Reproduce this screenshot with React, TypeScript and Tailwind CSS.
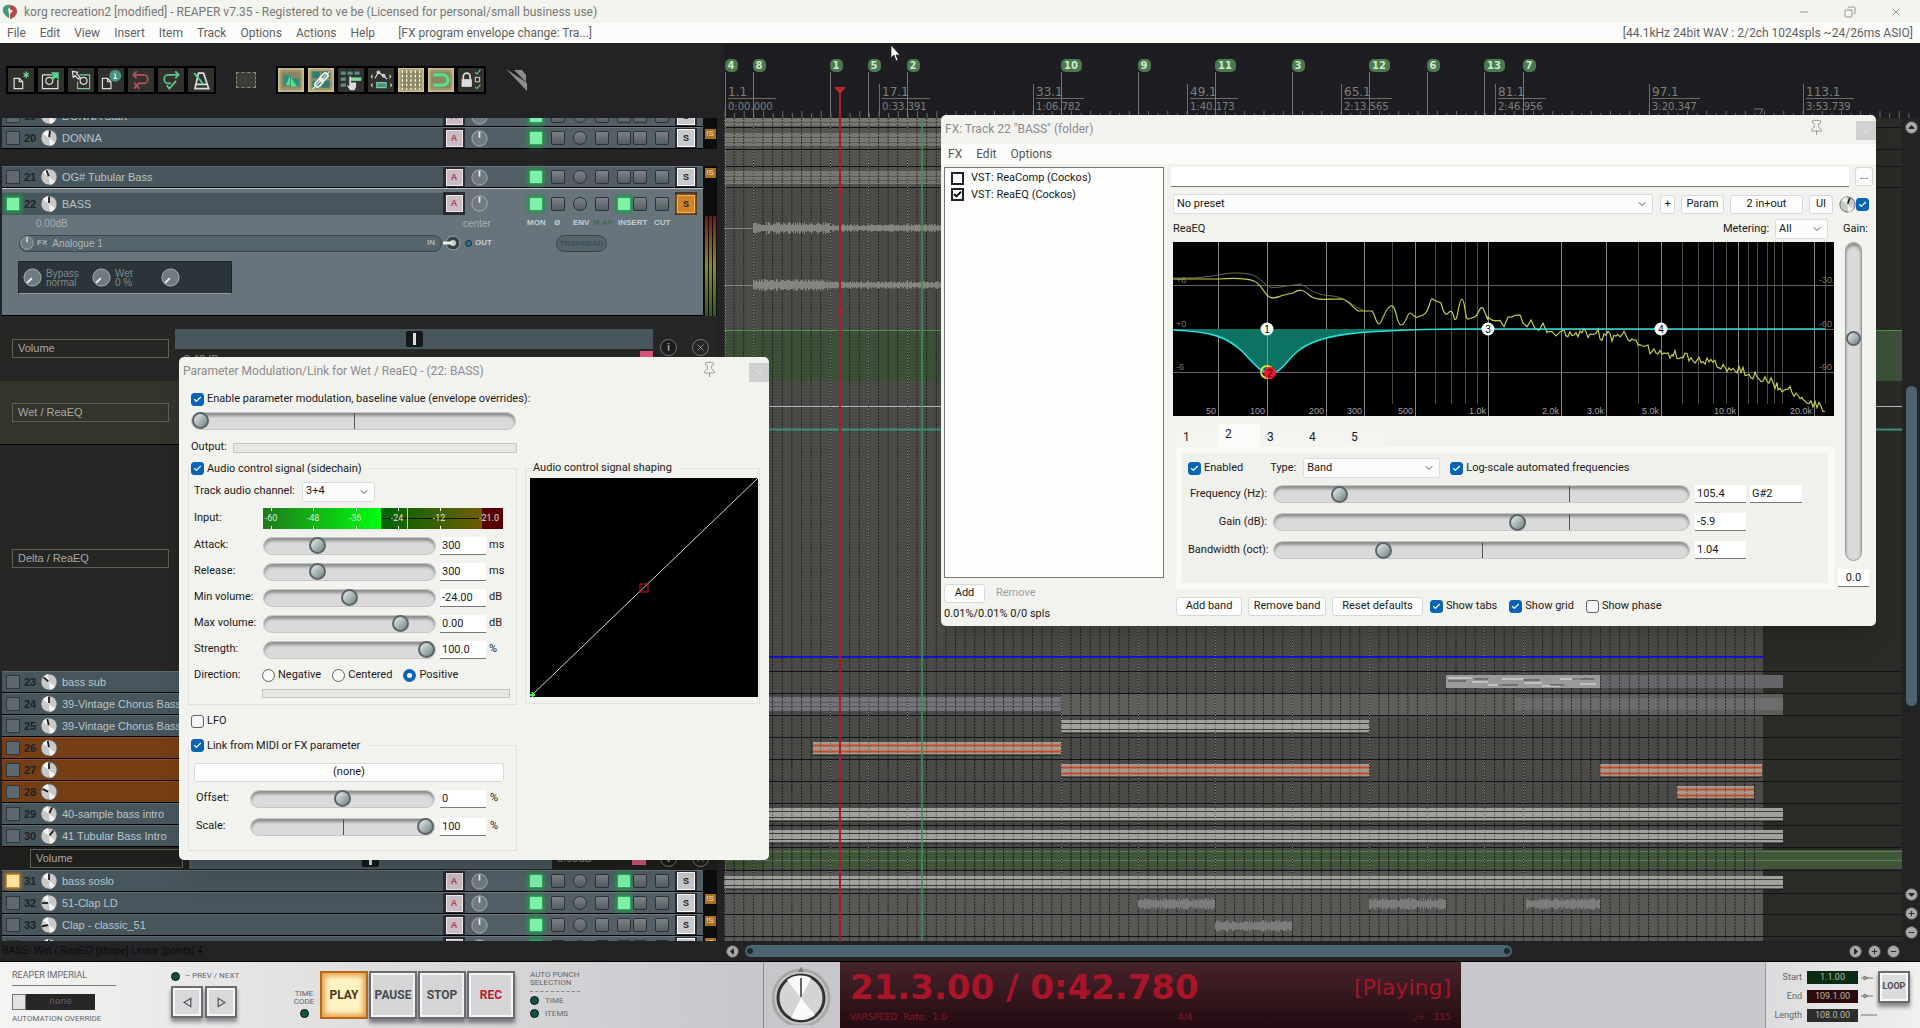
import type { ReactNode } from 'react';
import { Check, ChevronDown, Copy, Minus, Pin, X } from 'lucide-react';
import clsx from 'clsx';

// ---------------------------------------------------------------------------
// Data
// ---------------------------------------------------------------------------

interface Track {
  num: number;
  name: string;
  tint?: 'orange';
  angle?: number;
  insert?: boolean;
  solo?: boolean;
  badge?: boolean;
  arm?: 'green' | 'amber';
}

const MENU = ['File', 'Edit', 'View', 'Insert', 'Item', 'Track', 'Options', 'Actions', 'Help'];

const LOWER_TRACKS: Track[] = [
  { num: 23, name: 'bass sub', angle: -50 },
  { num: 24, name: '39-Vintage Chorus Bass', angle: 0 },
  { num: 25, name: '39-Vintage Chorus Bass', angle: -14 },
  { num: 26, name: '', tint: 'orange', angle: -10 },
  { num: 27, name: '', tint: 'orange', angle: 0 },
  { num: 28, name: '', tint: 'orange', angle: -65 },
  { num: 29, name: '40-sample bass intro', angle: 25 },
  { num: 30, name: '41 Tubular Bass Intro', angle: 40 },
];

const BOTTOM_TRACKS: Track[] = [
  { num: 31, name: 'bass soslo', angle: 0, insert: true, arm: 'amber' },
  { num: 32, name: '51-Clap LD', angle: -90, insert: true, badge: true },
  { num: 33, name: 'Clap - classic_51', angle: -100, badge: true },
];

const MARKERS = [
  { id: 4, x: 1 },
  { id: 8, x: 29 },
  { id: 1, x: 106 },
  { id: 5, x: 144 },
  { id: 2, x: 183 },
  { id: 10, x: 337 },
  { id: 9, x: 414 },
  { id: 11, x: 491 },
  { id: 3, x: 568 },
  { id: 12, x: 645 },
  { id: 6, x: 703 },
  { id: 13, x: 760 },
  { id: 7, x: 799 },
];

const RULER = [
  { bar: '1.1', time: '0:00.000' },
  { bar: '17.1', time: '0:33.391' },
  { bar: '33.1', time: '1:06.782' },
  { bar: '49.1', time: '1:40.173' },
  { bar: '65.1', time: '2:13.565' },
  { bar: '81.1', time: '2:46.956' },
  { bar: '97.1', time: '3:20.347' },
  { bar: '113.1', time: '3:53.739' },
];

const BARS_PX = 154;
const TICK_PX = BARS_PX / 16;
const PROJECT_END = 1039;
const ARRANGE_W = 1178;

// deterministic noise for the wave forms and the spectrum
const noise = (n: number) => {
  const s = Math.sin(n * 127.1 + 11.7) * 43758.5453;
  return s - Math.floor(s);
};

// ---------------------------------------------------------------------------
// Small controls
// ---------------------------------------------------------------------------

function CheckBox({ label, checked, square }: { label: string; checked?: boolean; square?: boolean }) {
  return (
    <label className="flex items-center gap-[3px] whitespace-nowrap">
      <span className="relative flex size-[13px]">
        <input
          type="checkbox"
          defaultChecked={checked}
          className={clsx(
            'size-[13px] appearance-none',
            square
              ? 'border-2 border-[#222] bg-white'
              : 'rounded-[3px] border border-[#606060] bg-[#f6f6f6] checked:border-[#0a64b4] checked:bg-[#0a64b4]',
          )}
        />
        {checked && (
          <Check
            className={clsx('pointer-events-none absolute inset-[2px] size-[9px]', square ? 'text-black' : 'text-white')}
            strokeWidth={square ? 5 : 3}
          />
        )}
      </span>
      {label}
    </label>
  );
}

function Radio({ label, checked }: { label: string; checked?: boolean }) {
  return (
    <label className="flex items-center gap-[3px]">
      <input
        type="radio"
        name="direction"
        defaultChecked={checked}
        className="size-[13px] appearance-none rounded-full border border-[#606060] bg-[#f8f8f8] checked:border-4 checked:border-[#0a64b4] checked:bg-white"
      />
      {label}
    </label>
  );
}

function Slider({ label, value, tick, className }: { label: string; value: number; tick?: number; className: string }) {
  return (
    <span className={clsx('relative flex h-[18px]', className)}>
      {tick !== undefined && (
        <span className="absolute inset-y-[1px] z-10 w-px bg-[#555]" style={{ left: `${tick}%` }} />
      )}
      <input
        type="range"
        aria-label={label}
        min={0}
        max={1000}
        defaultValue={value}
        className="h-[18px] w-full appearance-none rounded-full border border-[#c6c6c6] bg-[#dadada] shadow-[inset_0_3px_3px_#8f8f8f] [&::-webkit-slider-thumb]:relative [&::-webkit-slider-thumb]:z-20 [&::-webkit-slider-thumb]:size-[17px] [&::-webkit-slider-thumb]:appearance-none [&::-webkit-slider-thumb]:rounded-full [&::-webkit-slider-thumb]:border-2 [&::-webkit-slider-thumb]:border-[#5d6468] [&::-webkit-slider-thumb]:bg-linear-to-br [&::-webkit-slider-thumb]:from-[#e8eeee] [&::-webkit-slider-thumb]:to-[#6f8482]"
      />
    </span>
  );
}

function Field({ label, value, className }: { label: string; value: string; className: string }) {
  return (
    <input
      type="text"
      aria-label={label}
      defaultValue={value}
      className={clsx('h-[18px] border-b border-[#777] bg-white px-[2px] text-[11px]', className)}
    />
  );
}

function Dropdown({ label, value, className }: { label: string; value: string; className: string }) {
  return (
    <span className={clsx('relative flex h-5', className)}>
      <select
        aria-label={label}
        className="h-full w-full appearance-none rounded-[2px] border border-[#dcdcdc] bg-[#fcfcfc] pl-[3px] text-[11px]"
      >
        <option>{value}</option>
      </select>
      <ChevronDown className="pointer-events-none absolute top-[4px] right-[5px] size-3 text-[#555]" strokeWidth={2} />
    </span>
  );
}

function DialogButton({ children, className }: { children: ReactNode; className: string }) {
  return (
    <button
      type="button"
      className={clsx('h-[19px] rounded-[3px] border border-[#d8d8d8] bg-[#fdfdfd] text-center whitespace-nowrap', className)}
    >
      {children}
    </button>
  );
}

function DialogTitle({ children }: { children: ReactNode }) {
  return (
    <div className="flex h-[29px] items-start pl-1 text-[#8c8c8c]">
      <h2 className="flex-1 pt-[6px] text-[12px] leading-4 font-normal">{children}</h2>
      <Pin className="mt-[4px] mr-[31px] size-[17px] text-[#777]" strokeWidth={1} />
      <button type="button" aria-label="Close" className="mt-[6px] flex h-[19px] w-5 items-center justify-center bg-[#d0d0d0]">
        <X className="size-[10px] text-[#e2e2e2]" />
      </button>
    </div>
  );
}

// ---------------------------------------------------------------------------
// Toolbar
// ---------------------------------------------------------------------------

const PAGE = 'M6 12h6l4 4v8H6zM12 12v4h4';

const TOOLS: { name: string; on?: boolean; icon: ReactNode }[] = [
  {
    name: 'New project',
    icon: (
      <>
        <path d={PAGE} stroke="#ddd" />
        <path d="M20 4v8M17 6l6 4M23 6l-6 4" stroke="#6fe09a" />
      </>
    ),
  },
  {
    name: 'Open project',
    icon: (
      <>
        <path d="M4 8h12M4 8v16h18V14" stroke="#ddd" />
        <circle cx="12" cy="15" r="4" stroke="#ddd" />
        <path d="M14 5h9v9l-3-3-4 3-2-2 3-4z" fill="#55d68a" />
      </>
    ),
  },
  {
    name: 'Save project',
    icon: (
      <>
        <path d="M12 8h12v16H10V16" stroke="#6fcf97" />
        <circle cx="17" cy="15" r="4" stroke="#ddd" />
        <path d="M4 4l6 1-1 2 4 4-2 2-4-4-2 2z" stroke="#ddd" />
      </>
    ),
  },
  {
    name: 'Project settings',
    icon: (
      <>
        <path d={PAGE} transform="translate(-2 0)" stroke="#ddd" />
        <circle cx="19" cy="9" r="7" fill="#4d8f86" />
        <path d="M18 7h1v5h2m-4 0h2" stroke="#cfe" />
      </>
    ),
  },
  {
    name: 'Undo',
    icon: <path d="M5 8h12a5 5 0 0 1 0 10h-5M9 4L5 8l4 4M6 17l6 7M12 17l-6 7" stroke="#b8525c" strokeWidth="2" />,
  },
  {
    name: 'Redo',
    icon: <path d="M23 8H11a5 5 0 0 0 0 10h3M19 4l4 4-4 4M9 20l3 4 8-9" stroke="#5fc78a" strokeWidth="2" />,
  },
  {
    name: 'Metronome',
    icon: (
      <>
        <path d="M11 6h6l6 18H7zM9 19h12" stroke="#ddd" strokeWidth="2" />
        <path d="M6 6l11 13" stroke="#4fd787" strokeWidth="2" />
      </>
    ),
  },
];

const TOGGLES: typeof TOOLS = [
  {
    name: 'Auto crossfade',
    on: true,
    icon: (
      <>
        <path d="M5 8h9v13H5zM15 12h9v10h-9z" fill="#2f8f78" stroke="none" />
        <path d="M8 20L13 8v12zM14 22V11l7 11z" fill="#58e08c" stroke="none" />
      </>
    ),
  },
  {
    name: 'Item grouping',
    on: true,
    icon: (
      <>
        <path d="M4 4h9v8H4zM15 4h9v8h-9zM4 15h9v8H4zM15 15h9v8h-9z" fill="#2f7d74" stroke="none" />
        <path d="M4 25L24 4" stroke="#eee" />
        <rect x="6" y="14" width="11" height="6" rx="3" transform="rotate(-45 12 17)" stroke="#eee" strokeWidth="2" />
        <rect x="12" y="8" width="11" height="6" rx="3" transform="rotate(-45 17 11)" stroke="#eee" strokeWidth="2" />
      </>
    ),
  },
  {
    name: 'Ripple editing',
    icon: (
      <>
        <path d="M2 4h6v4H2zM10 4h6v4h-6zM18 4h6v4h-6zM2 11h6v4H2zM2 18h6v4H2z" fill="#568f86" stroke="none" />
        <path d="M14 11h12v4H14z" fill="#7be0a0" stroke="none" />
        <path d="M12 10h2v7h6v5l-2 4h-5l-4-6 3 1z" fill="#ddd" stroke="none" />
      </>
    ),
  },
  {
    name: 'Move envelopes',
    icon: (
      <>
        <path d="M7 12l4-7 7 5 3 3" stroke="#ddd" />
        <circle cx="11" cy="5" r="1.5" stroke="#ddd" />
        <circle cx="17" cy="9" r="1.5" stroke="#ddd" />
        <path d="M9 17h11v6H9z" fill="#4a8f80" stroke="#7ac9a0" />
        <path d="M4 7l-2 3 2 3zM24 7l2 3-2 3zM4 17l-2 3 2 3zM25 17l2 3-2 3z" fill="#ddd" stroke="none" />
      </>
    ),
  },
  {
    name: 'Grid lines',
    on: true,
    icon: <path d="M4 3v22M9 3v22M14 3v22M19 3v22M24 3v22" stroke="#fff" strokeDasharray="3 2" />,
  },
  {
    name: 'Snap',
    on: true,
    icon: <path d="M5 8h11a6 6 0 0 1 0 12H5" stroke="#55e08c" strokeWidth="4" />,
  },
  {
    name: 'Lock',
    icon: (
      <>
        <path d="M3 13h12v9H3z" fill="#ddd" stroke="none" />
        <path d="M5 13v-3a4 4 0 0 1 8 0v3" stroke="#ddd" strokeWidth="2" />
        <path d="M19 5l2 2 4-5M19 22l2 2 4-5" stroke="#55c987" />
        <rect x="19" y="11" width="5" height="5" stroke="#bbb" />
      </>
    ),
  },
];

function ToolGroup({ items }: { items: typeof TOOLS }) {
  return (
    <div className="flex">
      {items.map((t) => (
        <button
          key={t.name}
          type="button"
          aria-label={t.name}
          className={clsx(
            'flex h-7 w-[30px] items-center justify-center border-2 border-black',
            t.on ? 'bg-[#8b8561] shadow-[inset_0_0_3px_2px_#d3c48d]' : 'bg-[#31312d]',
          )}
        >
          <svg viewBox="0 0 28 28" className="size-6" fill="none" strokeWidth="1.4">
            {t.icon}
          </svg>
        </button>
      ))}
    </div>
  );
}

function Toolbar() {
  return (
    <div className="flex h-[75px] shrink-0 items-start bg-[#232326] pt-[23px] pl-[6px]">
      <ToolGroup items={TOOLS} />
      <div className="mx-5 mt-[6px] h-4 w-5 border border-dashed border-[#8a8a80] bg-[#3d3d37]" />
      <ToolGroup items={TOGGLES} />
      <svg className="mt-[2px] ml-[19px] h-6 w-6" viewBox="0 0 24 24">
        <path d="M1 1L22 23V15zM9 2l12 12V7l-4-5z" fill="#8d8d8d" />
      </svg>
    </div>
  );
}

// ---------------------------------------------------------------------------
// Track panel
// ---------------------------------------------------------------------------

function Knob({ size, angle = 0, dark }: { size: number; angle?: number; dark?: boolean }) {
  return (
    <svg width={size} height={size} viewBox="0 0 20 20" className="shrink-0">
      <circle cx="10" cy="10" r="9" fill={dark ? '#6f7b7f' : '#c9c9c9'} stroke={dark ? '#aebabd' : '#5a5a5a'} />
      {!dark && <path d="M10 10L3 5A9 9 0 0 1 9 1zM10 10l7 5a9 9 0 0 1-6 4z" fill="#f4f4f4" />}
      <path d="M10 9V2" stroke={dark ? '#e8eeee' : '#1d1d1d'} strokeWidth="2" transform={`rotate(${angle} 10 10)`} />
    </svg>
  );
}

function Pad({ name, on, round, className }: { name: string; on?: boolean; round?: boolean; className?: string }) {
  return (
    <button
      type="button"
      aria-label={name}
      className={clsx(
        'shrink-0 border',
        on ? 'size-[14px] border-[#2aa85c] bg-[#7ef0a8] shadow-[0_0_4px_2px_#2c8f52]' : 'size-[14px] border-[#2c3236] bg-linear-to-b from-[#7d8386] to-[#565d62]',
        round ? 'rounded-full' : 'rounded-[2px]',
        className,
      )}
    />
  );
}

function TrackControls({ track }: { track: Track }) {
  return (
    <div className="flex shrink-0 items-center">
      <div className="flex h-full w-[22px] items-center justify-center bg-[#2a2a30]">
        <button
          type="button"
          className="size-[17px] border border-[#efe6ea] bg-[#c9bcc4] text-center text-[9px] leading-[15px] font-bold text-[#b04058]"
        >
          A
        </button>
      </div>
      <div className="ml-[6px] flex w-[58px]">
        <Knob size={17} dark />
      </div>
      <Pad name="Monitor" on />
      <Pad name="Phase" className="ml-2" />
      <Pad name="Envelope" round className="ml-2" />
      <Pad name="Master send" className="ml-2" />
      <Pad name="FX" on={track.insert} className="ml-2" />
      <Pad name="FX bypass" className="ml-[2px]" />
      <Pad name="Mute" className="ml-2" />
      <div className="ml-[6px] flex h-full w-[22px] items-center justify-center bg-[#2a2a30]">
        <button
          type="button"
          className={clsx(
            'size-[18px] border text-center text-[9px] leading-4 font-bold text-[#222]',
            track.solo ? 'border-[#f0b060] bg-[#d08428] shadow-[0_0_3px_1px_#b46a1c]' : 'border-white bg-[#c9c9c9]',
          )}
        >
          S
        </button>
      </div>
      <span className="w-[6px]" />
    </div>
  );
}

function TrackHead({ track }: { track: Track }) {
  return (
    <div
      className={clsx(
        'flex min-w-0 flex-1 items-center border-t pl-[4px]',
        track.tint === 'orange' ? 'border-[#8e4d1e] bg-[#763e15]' : 'border-[#5c6c72] bg-[#47565c]',
      )}
    >
      <span
        className={clsx(
          'size-[14px] shrink-0 border',
          track.arm === 'green' && 'border-[#2aa85c] bg-[#7ef0a8] shadow-[0_0_4px_2px_#2c8f52]',
          track.arm === 'amber' && 'border-[#c98a2b] bg-[#ffe2a0] shadow-[0_0_3px_1px_#c27d1f]',
          !track.arm && 'border-[#2f373b] bg-[#5d696e]',
        )}
      />
      <span className="w-[20px] text-center text-[11px] font-bold text-[#1c2326]">{track.num}</span>
      <Knob size={18} angle={track.angle} />
      <span className="ml-1 truncate text-[11px] text-[#b9c4c8]">{track.name}</span>
    </div>
  );
}

function Meter({ badge, hot }: { badge?: boolean; hot?: boolean }) {
  return (
    <div className="flex w-[14px] shrink-0 justify-center bg-[#0d0d0d]">
      {badge && <span className="mt-[2px] h-[10px] w-[11px] bg-[#a86f22] text-center text-[8px] leading-[10px] text-[#f5e6c0]">!S</span>}
      {hot && (
        <div className="flex h-full gap-px pt-[28px]">
          <div className="w-[3px] bg-linear-to-b from-[#6e1512] via-[#8a8a2a] to-[#2f5a1c]" />
          <div className="w-[3px] bg-linear-to-b from-[#6e1512] via-[#8a8a2a] to-[#2f5a1c]" />
          <div className="w-[3px] bg-linear-to-b from-[#6e1512] via-[#8a8a2a] to-[#2f5a1c]" />
        </div>
      )}
    </div>
  );
}

function TrackRow({ track }: { track: Track }) {
  return (
    <div className="flex h-[22px] shrink-0 pl-[2px]">
      <div className="flex min-w-0 flex-1 border-b border-black">
        <TrackHead track={track} />
        <div className="flex border-t border-[#6b787e] bg-[#525f67]">
          <TrackControls track={track} />
        </div>
      </div>
      <Meter badge={track.badge} />
    </div>
  );
}

const BASS: Track = { num: 22, name: 'BASS', angle: 0, insert: true, solo: true, arm: 'green' };

function BassPanel() {
  return (
    <div className="flex h-32 shrink-0 pl-[2px]">
      <div className="flex flex-1 flex-col border-t border-b border-t-[#b8c2c8] border-b-black bg-[#68747c]">
        <div className="mt-[3px] flex h-[23px]">
          <TrackHead track={BASS} />
          <div className="flex">
            <TrackControls track={BASS} />
          </div>
        </div>
        <div className="flex h-4 items-center text-[8px] font-bold text-[#c3ccd0]">
          <span className="w-[461px] pl-[34px] text-[10px] font-normal text-[#a5b0b4]">0.00dB</span>
          <span className="w-[64px] text-[10px] font-normal text-[#a5b0b4]">center</span>
          <span className="w-[27px]">MON</span>
          <span className="w-[19px]">Ø</span>
          <span className="w-[20px]">ENV</span>
          <span className="w-[25px] text-[#3f6d52]">M.AF</span>
          <span className="w-[36px]">INSERT</span>
          <span>CUT</span>
        </div>
        <div className="mt-[3px] flex h-[18px] items-center text-[8px] font-bold text-[#aab5b9]">
          <div className="ml-[17px] flex h-[17px] w-[423px] items-center rounded-full border border-[#39484f] bg-[#55656c]">
            <Knob size={14} dark />
            <span className="ml-[3px]">FX</span>
            <span className="ml-[5px] flex-1 text-[10px] font-normal">Analogue 1</span>
            <span className="mr-[6px]">IN</span>
          </div>
          <svg width="20" height="16" viewBox="0 0 20 16" className="shrink-0">
            <circle cx="11" cy="8" r="7" fill="#3a4246" stroke="#9aa4a8" />
            <circle cx="11" cy="8" r="3" fill="#c8d0d2" />
            <path d="M1 8h9" stroke="#e8eeee" strokeWidth="3" />
          </svg>
          <span className="ml-[3px] size-[7px] rounded-full border border-[#0e2d3a] bg-[#2b6b86]" />
          <span className="ml-[3px] text-[#c3ccd0]">OUT</span>
          <span className="ml-[64px] h-[17px] w-[51px] rounded-full border border-[#38464c] bg-[#55656c] text-center leading-[15px] font-normal text-[#38464c]">
            TRIM/READ
          </span>
        </div>
        <div className="mt-[9px] ml-4 flex h-[33px] w-[214px] items-center border border-b-[#8e9aa0] border-[#1e262a] bg-[#2b3438] text-[10px] leading-[9px] text-[#7e8b8f]">
          <span className="ml-1">
            <Knob size={19} dark angle={-135} />
          </span>
          <span className="ml-1 w-[46px]">
            Bypass
            <br />
            normal
          </span>
          <Knob size={19} dark angle={-135} />
          <span className="ml-1 w-[46px]">
            Wet
            <br />0 %
          </span>
          <Knob size={19} dark angle={-135} />
        </div>
      </div>
      <Meter hot />
    </div>
  );
}

function EnvName({ children, className }: { children: ReactNode; className: string }) {
  return (
    <div className={clsx('h-[19px] border border-[#5e5e58] pl-[5px] text-[11px] leading-[17px] text-[#a8a8a4]', className)}>{children}</div>
  );
}

function EnvFader({ className }: { className: string }) {
  return (
    <div className={clsx('flex h-5 items-center justify-center bg-[#47565c]', className)}>
      <span className="flex h-4 w-[17px] justify-center rounded-[2px] bg-[#15191b] py-[2px]">
        <span className="w-[3px] bg-[#ddd]" />
      </span>
    </div>
  );
}

function EnvButtons() {
  return (
    <>
      <span className="ml-[14px] flex size-[17px] items-center justify-center rounded-full border border-[#777] bg-[#1c1c1c] text-[11px] font-bold text-[#999]">
        i
      </span>
      <span className="ml-[15px] flex size-[17px] items-center justify-center rounded-full border border-[#777] text-[#999]">
        <X className="size-[11px]" />
      </span>
    </>
  );
}

function TrackPanel() {
  return (
    <div className="flex min-h-0 flex-1 flex-col overflow-hidden bg-[#232326] pr-[7px] font-['Liberation_Sans',Arial,sans-serif]">
      <div className="flex h-[9px] shrink-0 flex-col justify-end overflow-hidden">
        <TrackRow track={{ num: 19, name: 'DONNA Start', angle: 0 }} />
      </div>
      <TrackRow track={{ num: 20, name: 'DONNA', angle: 8, badge: true }} />
      <div className="h-[17px] shrink-0" />
      <TrackRow track={{ num: 21, name: 'OG# Tubular Bass', angle: -20, badge: true }} />
      <BassPanel />
      <div className="flex h-[65px] shrink-0 items-start bg-[#262624] pt-[13px] pl-3">
        <EnvName className="mt-[10px] w-[157px]">Volume</EnvName>
        <div className="ml-[6px] w-[478px]">
          <EnvFader className="w-full" />
          <div className="flex justify-between pt-[2px] pl-[5px] text-[11px] leading-4 text-[#8a8a8a]">
            -2.42dB
            <span className="h-[9px] w-[13px] bg-[#d2567a]" />
          </div>
        </div>
        <div className="mt-[10px] -ml-[7px] flex">
          <EnvButtons />
        </div>
      </div>
      <div className="flex h-[63px] shrink-0 items-center bg-[#34342b] pl-3">
        <EnvName className="w-[157px]">Wet / ReaEQ</EnvName>
      </div>
      <div className="flex h-[227px] shrink-0 items-center border-t border-black bg-[#262624] pl-3">
        <EnvName className="w-[157px]">Delta / ReaEQ</EnvName>
      </div>
      {LOWER_TRACKS.map((t) => (
        <TrackRow key={t.num} track={t} />
      ))}
      <div className="flex h-[23px] shrink-0 items-center bg-[#1f1f1e] pl-[30px]">
        <EnvName className="w-[153px]">Volume</EnvName>
        <EnvFader className="ml-[6px] w-[363px]" />
        <span className="flex-1 pl-[5px] text-[11px] text-[#8a8a8a]">0.00dB</span>
        <span className="h-[13px] w-[14px] bg-[#d2567a]" />
        <EnvButtons />
        <span className="w-[8px]" />
      </div>
      {BOTTOM_TRACKS.map((t) => (
        <TrackRow key={t.num} track={t} />
      ))}
      <TrackRow track={{ num: 34, name: '', badge: true }} />
    </div>
  );
}

// ---------------------------------------------------------------------------
// Ruler + arrange view
// ---------------------------------------------------------------------------

function Ruler() {
  return (
    <svg className="block h-[75px] w-full shrink-0 bg-[#1e1e22]">
      {Array.from({ length: 124 }, (_, i) => (
        <path key={i} d={`M${i * TICK_PX + 1} 75v${i % 2 ? -5 : -7}`} stroke="#666" />
      ))}
      {RULER.map((r, i) => (
        <g key={r.bar} className="font-['DejaVu_Sans',sans-serif]" fill="#7f7f79">
          <path d={`M${i * BARS_PX + 1}.5 41v32M${i * BARS_PX + 4} 55.500h48`} stroke="#6c6c68" />
          <text x={i * BARS_PX + 4} y="53" className="text-[12px]">
            {r.bar}
          </text>
          <text x={i * BARS_PX + 4} y="67" className="text-[10px]">
            {r.time}
          </text>
        </g>
      ))}
      {MARKERS.map((m) => (
        <g key={m.id}>
          <path d={`M${m.x}.5 29v45`} stroke="#77776f" />
          <rect x={m.x} y="16" width={m.id > 9 ? 21 : 13} height="13" rx="5" fill="#4b7a52" />
          <text x={m.x + (m.id > 9 ? 10 : 6)} y="26" textAnchor="middle" fill="#cfe8c8" className="font-['DejaVu_Sans',sans-serif] text-[10px] font-bold">
            {m.id}
          </text>
        </g>
      ))}
      <path d="M110 44h12l-6 7z" fill="#b3262e" />
      <path d="M116 50v25" stroke="#a02430" strokeWidth="2" />
      <path d="M1030 66h9l-3 5" fill="none" stroke="#777" />
    </svg>
  );
}

function MidiItem({ x, y, w, hot }: { x: number; y: number; w: number; hot?: boolean }) {
  return (
    <g>
      <rect x={x} y={y} width={w} height="13" fill={hot ? '#a39a90' : '#a0a09d'} />
      <path d={`M${x} ${y + 3.5}h${w}M${x} ${y + 9.5}h${w}`} stroke={hot ? '#cc4a2a' : '#3b3b3b'} strokeWidth={hot ? 2 : 1} />
      <path d={`M${x} ${y + 13}h${w}`} stroke="#111" />
    </g>
  );
}

function wave(x0: number, x1: number, mid: number, amp: number) {
  let d = '';
  for (let x = x0; x < x1; x++) {
    const a = amp * (0.45 + noise(x * x + mid) * 0.55);
    d += `M${x + 0.5} ${mid - a}v${a * 2}`;
  }
  return d;
}

const LANE_LINES = [9, 31, 48, 69, 553, 575, 597, 619, 641, 663, 685, 707, 729, 752, 775, 796, 818];

function Arrange() {
  return (
    <svg className="block min-h-0 w-full flex-1 bg-[#2a2a26]">
      <defs>
        <pattern id="bars" width={TICK_PX} height="3" patternUnits="userSpaceOnUse">
          <path d="M.5 0v2" stroke="#16161a" opacity=".8" />
        </pattern>
      </defs>
      <rect width={PROJECT_END} height="823" fill="#4a4a47" />
      <rect y="0" width={PROJECT_END} height="69" fill="#54544f" />
      <rect y="752" width={PROJECT_END} height="71" fill="#575753" />

      {/* volume envelopes */}
      <rect y="212" width={ARRANGE_W} height="51" fill="#3c5038" />
      <path d={`M0 212.500h${ARRANGE_W}`} stroke="#4f9150" />
      <rect y="732" width={ARRANGE_W} height="19" fill="#3f5638" />
      <path d={`M0 733.500h${ARRANGE_W}M0 742.500h${ARRANGE_W}`} stroke="#5b7a5a" />

      {/* muted items */}
      <rect y="0" width={PROJECT_END} height="8" fill="#777770" />
      <rect y="15" width={PROJECT_END} height="13" fill="#777770" />
      <rect y="53" width={PROJECT_END} height="13" fill="#777770" />
      <rect y="575" x="337" width="722" height="22" fill="#5e5e5a" />
      <rect y="579" width="337" height="14" fill="#74747c" />
      <rect y="580" x="791" width="268" height="12" fill="#6c6c6c" />
      <rect y="557" x="876" width="183" height="13" fill="#66666a" />
      <path d="M0 4.500h1039M0 19.500h1039M0 24.500h1039M0 58.500h1039M0 62.500h1039M0 584.500h337M0 588.500h337" stroke="#5a5a58" />

      <rect width={PROJECT_END} height="823" fill="url(#bars)" />
      <path d={LANE_LINES.map((y) => `M0 ${y + 0.5}h${ARRANGE_W}`).join('')} stroke="#14141c" />

      {/* bass folder peaks */}
      <g stroke="#85857f">
        <path d="M0 110.500h300M0 167.500h300" />
        <path d={wave(29, 106, 110, 6)} />
        <path d={wave(106, 300, 110, 4)} />
        <path d={wave(29, 106, 167, 6)} />
        <path d={wave(106, 300, 167, 4)} />
      </g>

      <path d={`M0 288.500h${ARRANGE_W}`} stroke="#b4b4bc" />
      <path d={`M0 311.500h${ARRANGE_W}`} stroke="#3f8f7c" strokeWidth="2" />
      <path d={`M0 539h${PROJECT_END}`} stroke="#1212d0" strokeWidth="2" />

      <rect x="722" y="557" width="154" height="13" fill="#9a9a9a" />
      <path d="M724 560h24m0 4h16m0 3h14m0-6h22m0 4h18m0 3h18m0-7h20m0 5h16" stroke="#e8e8e8" />
      <path d="M724 563h18m8-2h14m10 6h20m6-5h16m10 5h14m8-6h22" stroke="#444" />
      <MidiItem x={337} y={602} w={308} />
      <MidiItem x={89} y={624} w={248} hot />
      <MidiItem x={337} y={646} w={308} hot />
      <MidiItem x={876} y={646} w={162} hot />
      <MidiItem x={953} y={668} w={77} hot />
      <MidiItem x={0} y={690} w={1059} />
      <MidiItem x={0} y={712} w={1059} />
      <MidiItem x={0} y={758} w={1059} />
      <rect y="600" width={PROJECT_END} height="175" fill="url(#bars)" opacity=".5" />

      <g stroke="#7c7c7c">
        <path d={wave(414, 491, 786, 6)} />
        <path d={wave(645, 722, 786, 6)} />
        <path d={wave(802, 876, 786, 6)} />
        <path d={wave(491, 568, 808, 6)} />
      </g>

      <path d={MARKERS.map((m) => `M${m.x + 0.5} 0v775`).join('')} stroke="#8a8a84" strokeDasharray="1 2" />
      <path d="M198 0v823" stroke="#3f8f4c" strokeWidth="2" opacity=".8" />
      <path d="M116 0v823" stroke="#96242e" strokeWidth="2" />
      <path d="M114 71l5 5m0-5l-5 5M114 191l5 5m0-5l-5 5" stroke="#c8262e" />
    </svg>
  );
}

function RoundButton({ name, glyph }: { name: string; glyph: string }) {
  return (
    <button type="button" aria-label={name} className="size-[13px] shrink-0 rounded-full border border-[#4b4b4b] bg-[#a9a9a9]">
      <svg viewBox="0 0 12 12" className="size-full" fill="#222" stroke="#222">
        <path d={glyph} />
      </svg>
    </button>
  );
}

const GLYPH = {
  left: 'M7 3v6L4 6z',
  right: 'M5 3v6l3-3z',
  up: 'M3 7h6L6 4z',
  down: 'M3 5h6L6 8z',
  plus: 'M3 6h6M6 3v6',
  minus: 'M3 6h6',
};

function HorizontalScroll() {
  return (
    <div className="flex h-[21px] shrink-0 items-center border-b border-black bg-[#232326] px-[2px]">
      <RoundButton name="Scroll left" glyph={GLYPH.left} />
      <div className="ml-[6px] flex-1">
        <div className="flex h-3 w-[69.500%] items-center justify-between rounded-full bg-[#4b6470] px-[2px]">
          <span className="size-[6px] rounded-full bg-[#1c2a33]" />
          <span className="size-[6px] rounded-full bg-[#1c2a33]" />
        </div>
      </div>
      <div className="flex gap-[6px] pr-[18px]">
        <RoundButton name="Scroll right" glyph={GLYPH.right} />
        <RoundButton name="Zoom in" glyph={GLYPH.plus} />
        <RoundButton name="Zoom out" glyph={GLYPH.minus} />
      </div>
    </div>
  );
}

function VerticalScroll() {
  return (
    <div className="flex w-[18px] shrink-0 flex-col items-center bg-[#232326] pt-[3px]">
      <RoundButton name="Scroll up" glyph={GLYPH.up} />
      <div className="flex w-[11px] flex-1 flex-col pt-[252px]">
        <div className="h-[320px] rounded-full bg-[#4b6470]" />
      </div>
      <div className="flex flex-col gap-[6px] pb-[2px]">
        <RoundButton name="Scroll down" glyph={GLYPH.down} />
        <RoundButton name="Taller tracks" glyph={GLYPH.plus} />
        <RoundButton name="Shorter tracks" glyph={GLYPH.minus} />
      </div>
    </div>
  );
}

// ---------------------------------------------------------------------------
// Parameter modulation window
// ---------------------------------------------------------------------------

const MOD_ROWS = [
  { label: 'Attack', value: 295, text: '300', unit: 'ms' },
  { label: 'Release', value: 295, text: '300', unit: 'ms' },
  { label: 'Min volume', value: 500, text: '-24.00', unit: 'dB' },
  { label: 'Max volume', value: 830, text: '0.00', unit: 'dB' },
  { label: 'Strength', value: 1000, text: '100.0', unit: '%' },
];

function InputMeter() {
  return (
    <svg width="240" height="21" className="block">
      <defs>
        <linearGradient id="level">
          <stop offset="0" stopColor="#1f7a1c" />
          <stop offset="1" stopColor="#00ff10" />
        </linearGradient>
        <linearGradient id="head">
          <stop offset="0" stopColor="#006400" />
          <stop offset="1" stopColor="#6e5e00" />
        </linearGradient>
      </defs>
      <rect width="118" height="21" fill="url(#level)" />
      <rect x="118" width="101" height="21" fill="url(#head)" />
      <rect x="219" width="21" height="21" fill="#560000" />
      <path d="M118 10.500h100" stroke="#111" />
      <path d="M144.500 0v21" stroke="#7dff70" />
      <path d="M8.500 0v3m0 15v3M50.500 0v3m0 15v3M93.500 0v3m0 15v3M135.500 0v3m0 15v3M177.500 0v3m0 15v3" stroke="#fff" />
      {['-60', '-48', '-36', '-24', '-12', '-21.0'].map((t, i) => (
        <text key={t} x={i === 5 ? 226 : 8 + i * 42} y="13" textAnchor="middle" fill="#d6e8d0" className="text-[9px]">
          {t}
        </text>
      ))}
    </svg>
  );
}

function GroupBox({ legend, children, className }: { legend: ReactNode; children: ReactNode; className: string }) {
  return (
    <fieldset className={clsx('border border-[#e2e2e2]', className)}>
      <legend className="h-[14px] pr-2 leading-[14px]">{legend}</legend>
      {children}
    </fieldset>
  );
}

function ModulationWindow() {
  return (
    <section className="absolute top-[357px] left-[179px] h-[503px] w-[590px] overflow-hidden rounded-[5px] bg-[#f2f2ef] font-['Roboto',sans-serif] text-[11px] text-[#1a1a1a] shadow-xl">
      <DialogTitle>Parameter Modulation/Link for Wet / ReaEQ - (22: BASS)</DialogTitle>
      <div className="flex gap-2 px-[9px] pt-[5px]">
        <div className="w-[329px]">
          <div className="pl-[3px]">
            <CheckBox label="Enable parameter modulation, baseline value (envelope overrides):" checked />
            <Slider label="Baseline value" value={0} tick={50} className="mt-[4px] w-[325px]" />
            <div className="mt-[10px] flex h-4 items-center">
              <span className="w-[42px]">Output:</span>
              <span className="h-[10px] flex-1 border border-[#c4c4c8] bg-[#e6e6e3]" />
            </div>
          </div>
          <GroupBox
            className="mt-[6px] h-[243px] pl-[5px]"
            legend={
              <span className="-ml-[3px] block">
                <CheckBox label="Audio control signal (sidechain)" checked />
              </span>
            }
          >
            <div className="mt-[6px] flex h-5 items-center">
              <span className="w-[108px]">Track audio channel:</span>
              <Dropdown label="Track audio channel" value="3+4" className="w-[73px]" />
            </div>
            <div className="mt-[6px] flex h-[21px] items-center">
              <span className="w-[69px]">Input:</span>
              <InputMeter />
            </div>
            <div className="mt-1 flex flex-col">
              {MOD_ROWS.map((r) => (
                <div key={r.label} className="flex h-[26px] items-center">
                  <span className="w-[69px]">{r.label}:</span>
                  <Slider label={r.label} value={r.value} className="w-[173px]" />
                  <Field label={`${r.label} value`} value={r.text} className="ml-1 w-[46px]" />
                  <span className="ml-[3px]">{r.unit}</span>
                </div>
              ))}
            </div>
            <div className="flex h-[26px] items-center">
              <span className="w-[68px]">Direction:</span>
              <div className="flex gap-[11px]">
                <Radio label="Negative" />
                <Radio label="Centered" />
                <Radio label="Positive" checked />
              </div>
            </div>
            <div className="ml-[68px] h-[9px] w-[248px] border border-[#c4c4c8] bg-[#e6e6e3]" />
          </GroupBox>
          <div className="mt-[10px] mb-[10px] flex h-[14px] items-center pl-[3px]">
            <CheckBox label="LFO" />
          </div>
          <GroupBox
            className="h-[112px] pl-[5px]"
            legend={
              <span className="-ml-[3px] block">
                <CheckBox label="Link from MIDI or FX parameter" checked />
              </span>
            }
          >
            <DialogButton className="mt-[10px] w-[310px]">(none)</DialogButton>
            {['Offset', 'Scale'].map((name, i) => (
              <div key={name} className="mt-[6px] flex h-[22px] items-center pl-[2px]">
                <span className="w-[54px]">{name}:</span>
                <Slider label={name} value={i ? 1000 : 500} tick={i ? 50 : undefined} className="w-[185px]" />
                <Field label={`${name} value`} value={i ? '100' : '0'} className="ml-[5px] w-[46px]" />
                <span className="ml-1">%</span>
              </div>
            ))}
          </GroupBox>
        </div>
        <GroupBox className="mt-[70px] h-[243px] w-[239px] pl-[4px]" legend={<span className="pl-[3px]">Audio control signal shaping</span>}>
          <svg width="228" height="219" className="mt-[3px] block bg-black">
            <path d="M2 217L228 0" stroke="#d8d8c8" />
            <rect x="110" y="106" width="8" height="8" fill="none" stroke="#d01820" />
            <path d="M0 217h5M2.500 214v5" stroke="#3cf05c" strokeWidth="2" />
          </svg>
        </GroupBox>
      </div>
    </section>
  );
}

// ---------------------------------------------------------------------------
// FX window
// ---------------------------------------------------------------------------

const EQ_LABELS: [number, string][] = [
  [45, '50'],
  [94, '100'],
  [153, '200'],
  [191, '300'],
  [242, '500'],
  [315, '1.0k'],
  [388, '2.0k'],
  [433, '3.0k'],
  [488, '5.0k'],
  [565, '10.0k'],
  [641, '20.0k'],
];
const EQ_MINOR = [219, 262, 278, 292, 304, 465, 509, 525, 540, 553, 575, 584, 594, 601, 609, 652];

const EQ_BANDS = [
  { id: 1, x: 94, y: 87 },
  { id: 3, x: 315, y: 87 },
  { id: 4, x: 488, y: 87 },
];

const SPECTRUM_LOW =
  'M0 37H45C60 36 74 36 81 39S92 52 95 54C100 58 104 55 111 53L120 51C126 47 130 47 136 53S150 57 169 57C175 58 178 64 185 69H199C202 72 203 82 206 82S212 65 218 64S223 83 228 83S234 71 237 71S241 77 245 75S253 74 256 64S259 57 261 58L268 61S271 74 274 72S277 68 279 70S281 80 283 77S286 57 289 57S292 78 295 77S301 76 303 74S307 64 310 66L315 78';

const SPECTRUM_TREND: [number, number, number][] = [
  [315, 78, 14],
  [350, 80, 16],
  [375, 87, 14],
  [391, 89, 12],
  [455, 95, 12],
  [465, 105, 10],
  [500, 112, 9],
  [550, 124, 10],
  [580, 133, 11],
  [605, 144, 10],
  [630, 154, 10],
  [653, 170, 8],
];

function spectrumHigh() {
  let d = '';
  for (let s = 1; s < SPECTRUM_TREND.length; s++) {
    const [x0, y0, jitter] = SPECTRUM_TREND[s - 1];
    const [x1, y1] = SPECTRUM_TREND[s];
    const step = x0 < 391 ? 4 : 2;
    for (let x = x0; x < x1; x += step) {
      const y = y0 + ((y1 - y0) * (x - x0)) / (x1 - x0) + (noise(x) - 0.5) * jitter;
      d += `L${x} ${y.toFixed(1)}`;
    }
  }
  return d;
}

function EqGraph() {
  return (
    <svg width="661" height="174" className="block bg-black font-['Liberation_Sans',Arial,sans-serif] text-[9px]" fill="none">
      <path d={EQ_MINOR.map((x) => `M${x + 0.5} 0v162`).join('')} stroke="#4c4c3c" />
      <path d={EQ_LABELS.map(([x]) => `M${x + 0.5} 0v174`).join('')} stroke="#85858c" />
      <path d="M0 43.500h661M0 87.500h661M0 130.500h661" stroke="#62626a" />
      {EQ_LABELS.map(([x, t]) => (
        <text key={t} x={x - 2} y="172" textAnchor="end" fill="#a0a0a8">
          {t}
        </text>
      ))}
      <g fill="#77776c">
        <text x="3" y="41">+6</text>
        <text x="3" y="85">+0</text>
        <text x="3" y="128">-6</text>
        <text x="659" y="41" textAnchor="end">-30</text>
        <text x="659" y="85" textAnchor="end">-60</text>
        <text x="659" y="128" textAnchor="end">-90</text>
      </g>
      <path d="M0 87C40 89 55 96 70 110C82 123 88 131 98 131C108 131 112 120 125 109C145 93 175 88 290 87z" fill="#0c7262" />
      <path d="M94.500 87v43" stroke="#6f9c94" />
      <path d="M0 36C40 37 46 31 62 31C80 31 84 34 92 42C98 48 104 45 128 42C136 46 140 53 160 54C175 56 178 64 190 68" stroke="#6e6e4c" />
      <path d={SPECTRUM_LOW + spectrumHigh()} stroke="#c6cc48" strokeWidth="1.200" />
      <path d="M0 88C40 89 55 96 70 110C82 123 88 131 98 131C108 131 112 120 125 109C145 93 175 88 290 87H652" stroke="#28e0d8" strokeWidth="1.600" />
      {EQ_BANDS.map((b) => (
        <g key={b.id}>
          <circle cx={b.x} cy={b.y} r="6.500" fill="#fff" />
          <text x={b.x} y={b.y + 4} textAnchor="middle" fill="#000" className="text-[10px]">
            {b.id}
          </text>
        </g>
      ))}
      <circle cx="94" cy="130" r="6" stroke="#e0e030" strokeWidth="2" />
      <circle cx="97" cy="131" r="6" fill="#f01830" />
      <text x="97" y="135" textAnchor="middle" fill="#4a0000" className="text-[10px]">
        2
      </text>
    </svg>
  );
}

const EQ_ROWS = [
  { label: 'Frequency (Hz):', value: 144, tick: 71, text: '105.4' },
  { label: 'Gain (dB):', value: 590, tick: 71, text: '-5.9' },
  { label: 'Bandwidth (oct):', value: 255, tick: 50, text: '1.04' },
];

function BandPanel() {
  return (
    <div className="h-[142px] border-[6px] border-[#f9f9f6] bg-[#f0f0ed] px-[6px] pt-[5px]">
      <div className="flex h-5 items-center">
        <CheckBox label="Enabled" checked />
        <span className="ml-[27px] w-[33px]">Type:</span>
        <Dropdown label="Type" value="Band" className="w-[137px]" />
        <span className="ml-[10px]">
          <CheckBox label="Log-scale automated frequencies" checked />
        </span>
      </div>
      <div className="mt-[2px]">
        {EQ_ROWS.map((r, i) => (
          <div key={r.label} className="flex h-7 items-center">
            <span className="w-[79px] text-right whitespace-nowrap">{r.label}</span>
            <Slider label={r.label} value={r.value} tick={r.tick} className="ml-[6px] w-[417px]" />
            <Field label={`${r.label} value`} value={r.text} className="ml-[5px] w-[51px]" />
            {i === 0 && <Field label="Note" value="G#2" className="ml-1 w-[52px] bg-[#f4f4f1]" />}
          </div>
        ))}
      </div>
    </div>
  );
}

function FxWindow() {
  return (
    <section className="absolute top-[115px] left-[941px] flex h-[511px] w-[935px] flex-col overflow-hidden rounded-[5px] bg-[#f2f2ef] font-['Roboto',sans-serif] text-[11px] text-[#1a1a1a] shadow-xl">
      <DialogTitle>FX: Track 22 "BASS" (folder)</DialogTitle>
      <nav className="flex h-5 shrink-0 items-center gap-[14px] bg-[#fbfbfa] pl-[7px] text-[12px] text-[#555]">
        <button type="button">FX</button>
        <button type="button">Edit</button>
        <button type="button">Options</button>
      </nav>
      <div className="flex min-h-0 flex-1 gap-[7px] px-[3px] pt-[3px]">
        <div className="flex w-[220px] flex-col">
          <div className="flex h-[411px] flex-col border border-[#777] bg-[#fdfdfc] px-[6px] pt-[2px] [&_label]:gap-[7px]">
            <CheckBox label="VST: ReaComp (Cockos)" square />
            <CheckBox label="VST: ReaEQ (Cockos)" square checked />
          </div>
          <div className="mt-[6px] flex items-center gap-[11px]">
            <DialogButton className="w-[41px]">Add</DialogButton>
            <button type="button" disabled className="text-[#a0a0a0]">
              Remove
            </button>
          </div>
          <p className="mt-[3px] leading-4">0.01%/0.01% 0/0 spls</p>
        </div>

        <div className="flex min-w-0 flex-1 flex-col">
          <div className="flex gap-[6px]">
            <input type="text" aria-label="FX comment" className="h-5 min-w-0 flex-1 border-b border-[#777] bg-white" />
            <DialogButton className="w-[18px]">...</DialogButton>
          </div>
          <div className="mt-[7px] flex items-center pr-1 pl-[2px]">
            <Dropdown label="Preset" value="No preset" className="mr-[7px] flex-1" />
            <DialogButton className="mr-[6px] w-[15px]">+</DialogButton>
            <DialogButton className="mr-[6px] w-[43px]">Param</DialogButton>
            <DialogButton className="mr-[6px] w-[73px]">2 in+out</DialogButton>
            <DialogButton className="mr-[6px] w-6">UI</DialogButton>
            <Knob size={17} angle={20} />
            <CheckBox label="" checked />
          </div>
          <div className="mt-[5px] flex h-5 items-center pr-[5px] pl-[2px]">
            <span className="flex-1">ReaEQ</span>
            <span className="mr-[6px]">Metering:</span>
            <Dropdown label="Metering" value="All" className="mr-[15px] w-[53px]" />
            <span>Gain:</span>
          </div>
          <div className="mt-[3px] flex gap-1 pl-[2px]">
            <div className="w-[661px]">
              <EqGraph />
              <div className="mt-[8px] ml-[3px] flex h-[23px] text-[12px]">
                {[1, 2, 3, 4, 5].map((n) => (
                  <button
                    key={n}
                    type="button"
                    className={clsx('w-[42px] pl-[7px] text-left', n === 2 ? 'bg-[#fbfbf9] pb-1' : 'mt-[2px] bg-[#f4f4f1]')}
                  >
                    {n}
                  </button>
                ))}
              </div>
              <div className="ml-[3px]">
                <BandPanel />
                <div className="mt-[8px] flex items-center">
                  <DialogButton className="mr-[6px] w-[66px]">Add band</DialogButton>
                  <DialogButton className="mr-[6px] w-[78px]">Remove band</DialogButton>
                  <DialogButton className="mr-[7px] w-[91px]">Reset defaults</DialogButton>
                  <div className="flex gap-[12px]">
                    <CheckBox label="Show tabs" checked />
                    <CheckBox label="Show grid" checked />
                    <CheckBox label="Show phase" />
                  </div>
                </div>
              </div>
            </div>
            <div className="flex w-[31px] flex-col items-center">
              <input
                type="range"
                aria-label="Gain"
                min={0}
                max={1000}
                defaultValue={710}
                className="h-[319px] w-[17px] appearance-none rounded-full border border-[#9a9a9a] bg-[#dadada] shadow-[inset_0_3px_3px_#8f8f8f] [direction:rtl] [writing-mode:vertical-lr] [&::-webkit-slider-thumb]:size-[15px] [&::-webkit-slider-thumb]:appearance-none [&::-webkit-slider-thumb]:rounded-full [&::-webkit-slider-thumb]:border-2 [&::-webkit-slider-thumb]:border-[#5d6468] [&::-webkit-slider-thumb]:bg-linear-to-br [&::-webkit-slider-thumb]:from-[#e8eeee] [&::-webkit-slider-thumb]:to-[#6f8482]"
              />
              <Field label="Gain value" value="0.0" className="mt-2 w-[31px] text-center" />
            </div>
          </div>
        </div>
      </div>
    </section>
  );
}

// ---------------------------------------------------------------------------
// Transport
// ---------------------------------------------------------------------------

function Led() {
  return <span className="size-[9px] shrink-0 rounded-full border border-[#0a1a14] bg-[#0f5142]" />;
}

function TransportButton({ label, tone }: { label: string; tone?: 'play' | 'rec' }) {
  return (
    <button
      type="button"
      className={clsx(
        'h-12 w-[48px] border-2 text-[12px] font-bold',
        tone === 'play' && 'border-[#b5691c] bg-[#fff3c4] text-[#4a3a20] shadow-[inset_0_0_5px_3px_#e8a24a]',
        tone !== 'play' && 'border-[#6b6b70] bg-[#d5d5d8] shadow-[inset_0_0_0_2px_#f4f4f4,0_4px_4px_#77777c]',
        tone === 'rec' && 'text-[#b81f2c]',
        !tone && 'text-[#4b4b4f]',
      )}
    >
      {label}
    </button>
  );
}

const LOOP_TIMES = [
  { label: 'Start', value: '1.1.00', tone: 'bg-[#0b2c12]' },
  { label: 'End', value: '109.1.00', tone: 'bg-[#2c0b0e]' },
  { label: 'Length', value: '108.0.00', tone: 'bg-[#2d2d2b]' },
];

function Transport() {
  return (
    <footer className="flex h-[66px] shrink-0 bg-linear-to-r from-[#f4f4f2] via-[#c6c6cb] via-40% to-[#c9c9cd] font-['Roboto',sans-serif] text-[8px] text-[#66666a]">
      <div className="flex w-[764px] shrink-0 border-r border-[#8a8a8e]">
        <div className="ml-3 w-[104px] pt-[7px]">
          <p className="border-b border-[#777] pb-[4px] text-[9px] leading-3">REAPER IMPERIAL</p>
          <div className="mt-[8px] flex h-4 w-[83px] items-center bg-[#262628]">
            <span className="h-4 w-[14px] border border-[#777] bg-[#e2e2e2]" />
            <span className="flex-1 text-center font-['DejaVu_Sans',sans-serif] text-[9px] text-[#666]">none</span>
          </div>
          <p className="pt-[3px] leading-3">AUTOMATION OVERRIDE</p>
        </div>
        <div className="ml-[55px] w-[66px] pt-2">
          <div className="flex items-center gap-[5px] whitespace-nowrap">
            <Led />
            <span>– PREV / NEXT</span>
          </div>
          <div className="mt-[4px] flex gap-[2px]">
            {['M13 4v10L5 9z', 'M5 4v10l8-5z'].map((d, i) => (
              <button
                key={d}
                type="button"
                aria-label={i ? 'Next' : 'Previous'}
                className="flex h-8 w-8 items-center justify-center border-2 border-[#6b6b70] bg-[#d9d9dc] shadow-[inset_0_0_0_2px_#f6f6f6,0_4px_4px_#88888c]"
              >
                <svg viewBox="0 0 18 18" className="size-[15px]" fill="none" stroke="#55555a" strokeWidth="1.500">
                  <path d={d} />
                </svg>
              </button>
            ))}
          </div>
        </div>
        <div className="ml-[55px] flex w-6 flex-col items-center pt-[28px] text-center leading-[8px]">
          TIME CODE
          <span className="mt-[3px] flex">
            <Led />
          </span>
        </div>
        <div className="ml-[4px] flex gap-px pt-[9px]">
          <TransportButton label="PLAY" tone="play" />
          <TransportButton label="PAUSE" />
          <TransportButton label="STOP" />
          <TransportButton label="REC" tone="rec" />
        </div>
        <div className="ml-[15px] pt-[9px] leading-[8px]">
          <p className="w-[50px] border-b border-dashed border-[#888] pb-[4px]">AUTO PUNCH SELECTION</p>
          <p className="mt-[4px] flex items-center gap-[6px]">
            <Led /> TIME
          </p>
          <p className="mt-[4px] flex items-center gap-[6px]">
            <Led /> ITEMS
          </p>
        </div>
      </div>
      <div className="flex w-[76px] shrink-0 items-center justify-center">
        <svg viewBox="0 0 60 60" className="size-[60px]">
          <circle cx="29" cy="33" r="28" fill="none" stroke="#a8a8a4" strokeWidth="3" />
          <circle cx="29" cy="33" r="23" fill="#d4d4d4" stroke="#333" strokeWidth="3" />
          <path d="M29 33L15 15A23 23 0 0 1 39 13zM29 33l14 17a23 23 0 0 1-24 3z" fill="#fafafa" />
          <path d="M29 32V13" stroke="#333" strokeWidth="1.500" />
          <path d="M29 2l3 5h-6z" fill="#777" />
        </svg>
      </div>
      <div className="flex w-[621px] flex-col bg-linear-to-b from-[#46242a] to-[#240c12] px-[10px] font-['DejaVu_Sans',sans-serif] text-[#a81428]">
        <div className="flex h-[50px] items-center justify-between">
          <span className="text-[34px] leading-10 font-bold">21.3.00 / 0:42.780</span>
          <span className="text-[22px]">[Playing]</span>
        </div>
        <div className="flex h-3 items-center text-[9px] text-[#8a1526]">
          <span className="w-[328px]">VARSPEED&nbsp; Rate:&nbsp; 1.0</span>
          <span className="flex-1">4/4</span>
          <span>♩=&nbsp;&nbsp; 115</span>
        </div>
      </div>
      <div className="flex-1 border-r border-[#9a9a9e]" />
      <div className="flex w-[154px] shrink-0 bg-linear-to-r from-[#dcdcde] to-[#f0f0ee]">
        <div className="flex w-[92px] flex-col gap-[6px] pt-[9px]">
          {LOOP_TIMES.map((t) => (
            <div key={t.label} className="flex h-[13px] items-center justify-end gap-[5px] text-[9px]">
              {t.label}
              <span className={clsx('h-[13px] w-[51px] text-center leading-[13px] text-[#b8b8a8]', t.tone)}>{t.value}</span>
            </div>
          ))}
        </div>
        <svg width="19" height="60" className="ml-[1px]" fill="none" stroke="#777">
          <path d="M2 16h12M5 14v4l4-2zM2 34h12M5 32v4l4-2zM2 53h16" />
        </svg>
        <button
          type="button"
          className="mt-[9px] h-8 w-8 border-2 border-[#6b6b70] bg-[#dcdcde] text-[9px] font-bold text-[#4b4b4f] shadow-[inset_0_0_0_2px_#f6f6f6,0_4px_4px_#88888c]"
        >
          LOOP
        </button>
      </div>
    </footer>
  );
}

// ---------------------------------------------------------------------------
// App
// ---------------------------------------------------------------------------

export default function App() {
  return (
    <div className="relative flex h-screen w-full flex-col overflow-hidden bg-[#232326] font-['Liberation_Sans',Arial,sans-serif]">
      <header className="shrink-0 font-['Roboto',sans-serif] text-[12px] text-[#777]">
        <div className="flex h-[23px] items-center bg-[#f4f4ee] pr-[18px] pl-[2px]">
          <svg viewBox="0 0 16 16" className="mr-[6px] size-4">
            <path d="M1 4a7 7 0 0 1 7-3l-1 13C3 12 0 8 1 4z" fill="#3f9a78" />
            <path d="M8 1c4 0 7 3 7 6s-2 7-7 8z" fill="#b84a48" />
            <path d="M6 4l5 3-4 4z" fill="#f4f4ee" />
          </svg>
          <h1 className="flex-1">korg recreation2 [modified] - REAPER v7.35 - Registered to ve be (Licensed for personal/small business use)</h1>
          <div className="flex gap-[34px]">
            <Minus className="size-3" strokeWidth={1.5} />
            <Copy className="size-3 -scale-x-100" strokeWidth={1.5} />
            <X className="size-3" strokeWidth={1.5} />
          </div>
        </div>
        <nav className="flex h-5 items-center gap-[14px] bg-[#fcfcfa] px-[7px] text-[#5f5f5f]">
          {MENU.map((m) => (
            <button key={m} type="button">
              {m}
            </button>
          ))}
          <span className="ml-[9px] flex-1">[FX program envelope change: Tra...]</span>
          <span>[44.1kHz 24bit WAV : 2/2ch 1024spls ~24/26ms ASIO]</span>
        </nav>
      </header>

      <main className="flex min-h-0 flex-1">
        <div className="flex w-[724px] shrink-0 flex-col">
          <Toolbar />
          <TrackPanel />
          <p className="h-[21px] shrink-0 border-b border-black bg-[#232326] pl-[2px] text-[10px] leading-5 text-[#0c0c0c]">
            BASS: Wet / ReaEQ [shape] Linear [points] 4
          </p>
        </div>
        <div className="flex min-w-0 flex-1 flex-col">
          <Ruler />
          <div className="flex min-h-0 flex-1">
            <Arrange />
            <VerticalScroll />
          </div>
          <HorizontalScroll />
        </div>
      </main>

      <Transport />

      <ModulationWindow />
      <FxWindow />

      {/* mouse pointer */}
      <svg viewBox="0 0 12 18" className="pointer-events-none absolute top-[44px] left-[890px] h-[18px] w-3">
        <path d="M1 1v13l3-3 2 6 2-1-2-5h4z" fill="#fff" stroke="#222" strokeWidth=".8" />
      </svg>
    </div>
  );
}
